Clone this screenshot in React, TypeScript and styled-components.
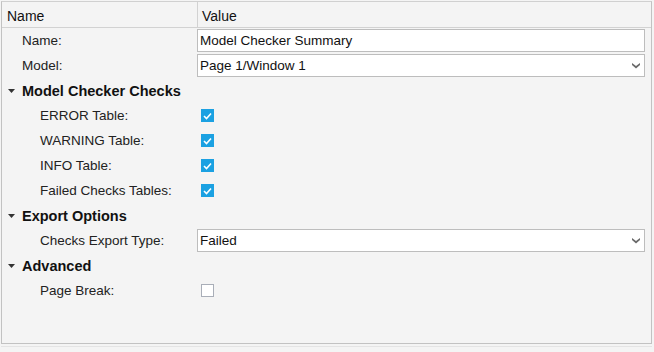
import React, { useState } from "react";
import styled, { createGlobalStyle } from "styled-components";

const GlobalStyle = createGlobalStyle`
  html, body {
    margin: 0;
    padding: 0;
    background: #f4f4f4;
  }
  body {
    font-family: "Liberation Sans", Arial, sans-serif;
    font-size: 13.5px;
    color: #111;
  }
`;

type Check = { label: string; checked: boolean };

export default function App() {
  const [checks, setChecks] = useState<Check[]>([
    { label: "ERROR Table:", checked: true },
    { label: "WARNING Table:", checked: true },
    { label: "INFO Table:", checked: true },
    { label: "Failed Checks Tables:", checked: true },
  ]);
  const [pageBreak, setPageBreak] = useState(false);

  const toggle = (i: number) => {
    setChecks(checks.map((c, j) => (j === i ? { ...c, checked: !c.checked } : c)));
  };

  return (
    <Wrapper>
      <GlobalStyle />
      <Panel>
        <HeaderRow>
          <HeaderCell>Name</HeaderCell>
          <HeaderCell divider>Value</HeaderCell>
        </HeaderRow>

        <Row>
          <Label level={1}>Name:</Label>
          <Field>
            <TextInput defaultValue="Model Checker Summary" />
          </Field>
        </Row>
        <Row>
          <Label level={1}>Model:</Label>
          <Field>
            <Select>
              Page 1/Window 1
              <Arrow />
            </Select>
          </Field>
        </Row>

        <GroupRow>
          <Caret />
          Model Checker Checks
        </GroupRow>
        {checks.map((c, i) => (
          <Row key={c.label}>
            <Label level={2}>{c.label}</Label>
            <Field>
              <CheckBox checked={c.checked} onClick={() => toggle(i)} />
            </Field>
          </Row>
        ))}

        <GroupRow>
          <Caret />
          Export Options
        </GroupRow>
        <Row>
          <Label level={2}>Checks Export Type:</Label>
          <Field>
            <Select>
              Failed
              <Arrow />
            </Select>
          </Field>
        </Row>

        <GroupRow>
          <Caret />
          Advanced
        </GroupRow>
        <Row>
          <Label level={2}>Page Break:</Label>
          <Field>
            <CheckBox checked={pageBreak} onClick={() => setPageBreak(!pageBreak)} />
          </Field>
        </Row>
      </Panel>
      <Footer />
    </Wrapper>
  );
}

function Caret() {
  return (
    <CaretSvg width="7" height="4" viewBox="0 0 7 4">
      <path d="M0 0 H7 L3.5 4 Z" fill="#333" />
    </CaretSvg>
  );
}

function Arrow() {
  return (
    <ArrowSvg width="8" height="6" viewBox="0 0 8 6">
      <path d="M0 0 L4 3 L8 0 V2 L4 5.5 L0 2 Z" fill="#6a6a6a" />
    </ArrowSvg>
  );
}

function CheckBox({ checked, onClick }: { checked: boolean; onClick: () => void }) {
  return (
    <Box checked={checked} onClick={onClick}>
      {checked && (
        <svg width="9" height="8" viewBox="0 0 9 8">
          <path d="M1 4 L3.5 6.5 L8 1.5" stroke="#fff" strokeWidth="1.6" fill="none" />
        </svg>
      )}
    </Box>
  );
}

const Wrapper = styled.div`
  width: 654px;
  height: 352px;
  display: flex;
  flex-direction: column;
  padding: 1px 2px 0 1px;
  box-sizing: border-box;
`;

const Panel = styled.div`
  height: 346px;
  box-sizing: border-box;
  border: 1px solid #c2c2c2;
  border-top-color: #d0d0d0;
  background: #f4f4f4;
  display: flex;
  flex-direction: column;
`;

const Footer = styled.div`
  height: 5px;
  margin-top: 2px;
  border-top: 1px solid #e4e4e4;
`;

const HeaderRow = styled.div`
  display: grid;
  grid-template-columns: 195px 1fr;
  height: 25px;
  border-bottom: 1px solid #d2d2d2;
  background: #f4f4f4;
`;

const HeaderCell = styled.div<{ divider?: boolean }>`
  display: flex;
  align-items: center;
  padding-left: ${(p) => (p.divider ? "4px" : "5px")};
  font-size: 14px;
  color: #111;
  border-left: ${(p) => (p.divider ? "1px solid #d2d2d2" : "none")};
  padding-top: 2px;
`;

const Row = styled.div`
  display: grid;
  grid-template-columns: 195px 1fr;
  height: 25px;
  align-items: center;
`;

const Label = styled.div<{ level: number }>`
  padding-left: ${(p) => (p.level === 1 ? 20 : 38)}px;
  color: #222;
`;

const Field = styled.div`
  display: flex;
  align-items: center;
  padding-right: 6px;
`;

const TextInput = styled.input`
  flex: 1;
  height: 23px;
  box-sizing: border-box;
  border: 1px solid #bdbdbd;
  background: #fff;
  font-family: "Liberation Sans", Arial, sans-serif;
  font-size: 13.5px;
  color: #111;
  padding: 0 0 0 2px;
  margin: 0;
  outline: none;
`;

const Select = styled.div`
  flex: 1;
  height: 23px;
  box-sizing: border-box;
  border: 1px solid #bdbdbd;
  background: #fff;
  display: flex;
  align-items: center;
  justify-content: space-between;
  padding: 0 4px 0 2px;
  color: #111;
`;

const ArrowSvg = styled.svg`
  display: block;
`;

const GroupRow = styled.div`
  height: 25px;
  display: flex;
  align-items: center;
  padding-left: 6px;
  font-weight: bold;
  font-size: 14.5px;
  color: #111;
`;

const CaretSvg = styled.svg`
  display: block;
  margin-right: 7px;
`;

const Box = styled.div<{ checked: boolean }>`
  width: 13px;
  height: 13px;
  margin-left: 4px;
  box-sizing: border-box;
  display: flex;
  align-items: center;
  justify-content: center;
  cursor: pointer;
  background: ${(p) => (p.checked ? "#1ba1e2" : "#fff")};
  border: 1px solid ${(p) => (p.checked ? "#1ba1e2" : "#a9aeb8")};
`;
